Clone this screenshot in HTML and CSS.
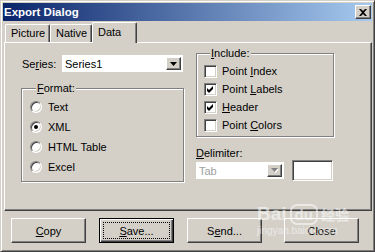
FILE: index.html
```html
<!doctype html>
<html lang="en">
<head>
 <meta charset="UTF-8">
 <meta name="viewport" content="width=device-width, initial-scale=1.0">
 <title>Export Dialog</title>
 <link rel="stylesheet" href="styles.css">
</head>
<body>
<div class="dialog">
 <div class="titlebar">
  <span class="title">Export Dialog</span>
  <span class="close-btn">
   <svg width="8" height="7" viewBox="0 0 8 7"><path d="M0 0h2l2 2 2-2h2L5 3.5 8 7H6L4 5 2 7H0l3-3.5z"/></svg>
  </span>
 </div>

 <div class="tabs">
  <div class="tab tab-picture">Picture</div>
  <div class="tab tab-native">Native</div>
  <div class="tab tab-data active">Data</div>
 </div>

 <div class="panel">
  <div class="col-left">
   <div class="series-row">
    <span class="series-label">Se<u>r</u>ies:</span>
    <div class="combo series-combo">
     <span class="combo-text">Series1</span>
     <span class="combo-btn"><svg width="7" height="4" viewBox="0 0 7 4"><polygon points="0,0 7,0 3.5,4"/></svg></span>
    </div>
   </div>

   <fieldset class="group format-group">
    <legend><u>F</u>ormat:</legend>
    <div class="opt"><span class="radio"></span><span>Text</span></div>
    <div class="opt"><span class="radio checked"></span><span>XML</span></div>
    <div class="opt"><span class="radio"></span><span>HTML Table</span></div>
    <div class="opt"><span class="radio"></span><span>Excel</span></div>
   </fieldset>
  </div>

  <div class="col-right">
   <fieldset class="group include-group">
    <legend><u>I</u>nclude:</legend>
    <div class="chk-row"><span class="chk"></span><span>Point <u>I</u>ndex</span></div>
    <div class="chk-row"><span class="chk"><svg width="7" height="7" viewBox="0 0 7 7"><polygon points="0,2 2,4 6,0 6,3 2,7 0,5"/></svg></span><span>Point <u>L</u>abels</span></div>
    <div class="chk-row"><span class="chk"><svg width="7" height="7" viewBox="0 0 7 7"><polygon points="0,2 2,4 6,0 6,3 2,7 0,5"/></svg></span><span><u>H</u>eader</span></div>
    <div class="chk-row"><span class="chk"></span><span>Point <u>C</u>olors</span></div>
   </fieldset>

   <div class="delim-label"><u>D</u>elimiter:</div>
   <div class="delim-row">
    <div class="combo delim-combo disabled">
     <span class="combo-text">Tab</span>
     <span class="combo-btn"><svg width="8" height="5" viewBox="0 0 8 5"><polygon points="1,1 8,1 4.5,5" fill="#fff"/><polygon points="0,0 7,0 3.5,4" fill="#808080"/></svg></span>
    </div>
    <div class="textbox"></div>
   </div>
  </div>
 </div>

 <div class="buttons">
  <div class="btn btn-copy"><span><u>C</u>opy</span></div>
  <div class="btn btn-save default"><span class="focus"><span><u>S</u>ave...</span></span></div>
  <div class="btn btn-send"><span>S<u>e</u>nd...</span></div>
  <div class="btn btn-close"><span>Close</span></div>
 </div>

 <div class="watermark">
  <div class="wm-main"><span class="wm-bai">Bai</span><span class="wm-du">du</span><span class="wm-cn">经验</span></div>
  <div class="wm-url">jingyan.baidu.com</div>
 </div>
</div>
</body>
</html>
```

FILE: styles.css
```css
*{
 margin:0;
 padding:0;
 box-sizing:border-box;
}
html,body{
 height:100%;
 overflow:hidden;
}
body{
 background:#d4d0c8;
 font:11px "Liberation Sans", Arial, sans-serif;
 color:#000;
}
u{
 text-decoration:underline;
 text-underline-offset:1px;
}

/* window frame */
.dialog{
 position:relative;
 width:375px;
 height:252px;
 padding:2px;
 background:#d4d0c8;
 border:1px solid;
 border-color:#d4d0c8 #404040 #404040 #d4d0c8;
 box-shadow:inset 1px 1px #fff, inset -1px -1px #808080;
}
.titlebar{
 height:18px;
 display:flex;
 align-items:center;
 justify-content:space-between;
 padding-left:1px;
 background:linear-gradient(to right, #0a246a, #a6caf0);
}
.title{
 color:#fff;
 font-weight:bold;
 font-size:11.5px;
}
.close-btn{
 width:16px;
 height:14px;
 margin-right:1px;
 display:flex;
 align-items:center;
 justify-content:center;
 background:#d4d0c8;
 border:1px solid;
 border-color:#fff #404040 #404040 #fff;
 box-shadow:inset -1px -1px #808080;
}

/* tabs */
.tabs{
 margin-top:1px;
 height:20px;
 padding-left:2px;
 display:flex;
 align-items:flex-end;
}
.tab{
 height:18px;
 line-height:16px;
 padding-left:5px;
 border:1px solid;
 border-bottom:0;
 border-color:#fff #404040 #404040 #fff;
 border-radius:2px 2px 0 0;
 box-shadow:inset -1px 0 #808080;
 background:#d4d0c8;
}
.tab-picture{ width:45px; }
.tab-native{ width:42px; }
.tab-data{ width:45px; }
.tab.active{
 position:relative;
 z-index:1;
 height:21px;
 line-height:18px;
 margin-bottom:-1px;
}

/* tab page */
.panel{
 margin-left:1px;
 width:368px;
 height:169px;
 padding:4px 0 0 16px;
 border:1px solid;
 border-color:#fff #404040 #404040 #fff;
 box-shadow:inset -1px -1px #808080;
 display:grid;
 grid-template-columns:163px 138px;
 column-gap:12px;
 align-items:start;
}

.series-row{
 margin-top:8px;
 height:17px;
 display:flex;
 align-items:center;
}
.series-label{
 width:41px;
 padding-left:1px;
}

.combo{
 height:17px;
 display:flex;
 align-items:center;
 justify-content:space-between;
 background:#fff;
 padding:0 2px 0 3px;
}
.series-combo{ width:121px; }
.combo-btn{
 width:15px;
 height:13px;
 display:flex;
 align-items:center;
 justify-content:center;
 background:#d4d0c8;
 border:1px solid;
 border-color:#fff #404040 #404040 #fff;
 box-shadow:inset -1px -1px #808080;
}
.combo.disabled .combo-text{ color:#a0a0a0; }

/* group boxes */
.group{
 border:1px solid #808080;
 box-shadow:inset 1px 1px #fff, 1px 1px #fff;
 min-width:0;
}
.group legend{
 line-height:12px;
 padding:0 1px;
 background:#d4d0c8;
}
.format-group{
 margin-top:10px;
 width:163px;
 padding:3px 0 4px 8px;
}
.format-group legend{ margin-left:6px; }
.include-group{
 width:138px;
 padding:3px 0 2px 7px;
}
.include-group legend{ margin-left:6px; }

.opt{
 height:20px;
 display:flex;
 align-items:center;
 gap:6px;
}
.radio{
 position:relative;
 width:12px;
 height:12px;
 border-radius:50%;
 background:#fff;
 border:1px solid;
 border-color:#808080 #fff #fff #808080;
 box-shadow:inset 1px 1px #404040, inset -1px -1px #d4d0c8;
}
.radio.checked:after{
 content:'';
 position:absolute;
 left:3px;
 top:3px;
 width:4px;
 height:4px;
 border-radius:50%;
 background:#000;
}

.chk-row{
 height:18px;
 display:flex;
 align-items:center;
 gap:5px;
}
.chk{
 width:13px;
 height:13px;
 display:flex;
 align-items:center;
 justify-content:center;
 background:#fff;
 border:1px solid;
 border-color:#808080 #fff #fff #808080;
 box-shadow:inset 1px 1px #404040, inset -1px -1px #d4d0c8;
}

.delim-label{
 margin-top:10px;
 line-height:13px;
}
.delim-row{
 height:21px;
 display:flex;
 align-items:center;
 gap:8px;
}
.delim-combo{ width:88px; }
.textbox{
 width:41px;
 height:21px;
 background:#fff;
 border:1px solid;
 border-color:#808080 #fff #fff #808080;
 box-shadow:inset 1px 1px #404040, inset -1px -1px #d4d0c8;
}

/* bottom buttons */
.buttons{
 margin-top:7px;
 padding-left:8px;
 display:flex;
}
.btn{
 width:75px;
 height:25px;
 display:flex;
 align-items:center;
 justify-content:center;
 border:1px solid;
 border-color:#fff #404040 #404040 #fff;
 box-shadow:inset -1px -1px #808080;
}
.btn-save{ margin-left:13px; }
.btn-send{ margin-left:13px; }
.btn-close{ margin-left:22px; }
.btn.default{
 border-color:#000;
 box-shadow:inset 1px 1px #fff, inset -1px -1px #404040, inset -2px -2px #808080;
}
.focus{
 width:67px;
 height:17px;
 display:flex;
 align-items:center;
 justify-content:center;
 border:1px dotted #000;
}

/* watermark over the dialog */
.watermark{
 position:absolute;
 left:256px;
 top:202px;
 color:#fff;
 opacity:.55;
 pointer-events:none;
}
.wm-main{
 display:flex;
 align-items:center;
 font-weight:bold;
}
.wm-bai{ font-size:19px; }
.wm-du{
 margin-left:3px;
 padding:0 3px;
 font-size:15px;
 border:2px solid #fff;
 border-radius:7px;
}
.wm-cn{
 margin-left:3px;
 font-family:"Noto Sans CJK SC", sans-serif;
 font-size:14px;
}
.wm-url{
 margin-top:0;
 font-size:10px;
}
```
